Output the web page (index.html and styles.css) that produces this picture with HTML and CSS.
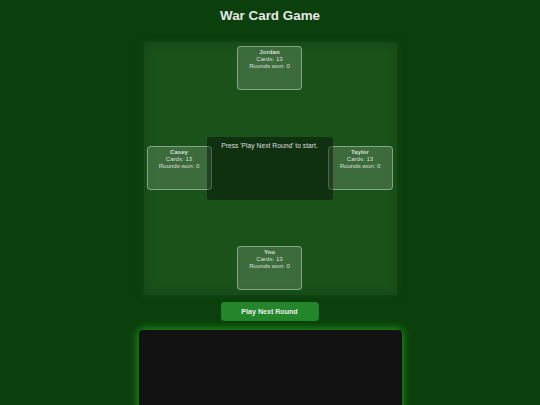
FILE: index.html
```html
<!DOCTYPE html>
<html>
<head>
<meta charset="utf-8">
<title>War Card Game</title>
<link rel="stylesheet" href="styles.css">
</head>
<body>
<h1 class="title">War Card Game</h1>
<div class="table">
  <div class="row">
    <div class="player"><div class="name">Jordan</div><div>Cards: 13</div><div>Rounds won: 0</div></div>
  </div>
  <div class="row middle">
    <div class="player"><div class="name">Casey</div><div>Cards: 13</div><div>Rounds won: 0</div></div>
    <div class="center">Press 'Play Next Round' to start.</div>
    <div class="player"><div class="name">Taylor</div><div>Cards: 13</div><div>Rounds won: 0</div></div>
  </div>
  <div class="row">
    <div class="player"><div class="name">You</div><div>Cards: 13</div><div>Rounds won: 0</div></div>
  </div>
</div>
<div class="controls"><button class="play">Play Next Round</button></div>
<div class="log"></div>
</body>
</html>
```
FILE: styles.css
```css
html, body {
  margin: 0;
  padding: 0;
  background: #0b3f0b;
  font-family: "Liberation Sans", Arial, sans-serif;
  color: #e2e2e2;
  overflow: hidden;
}
.title {
  margin: 8px 0 0;
  font-size: 13.4px;
  line-height: 16px;
  font-weight: bold;
  text-align: center;
  color: #e6e6e6;
}
.table {
  width: 246px;
  height: 244px;
  margin: 18px auto 0;
  padding: 4px 4px 5px 3px;
  background: #1a531a;
  box-shadow: 0 0 6px 1px rgba(22, 74, 22, 0.7), inset 0 0 10px 3px rgba(0, 0, 0, 0.13);
  display: flex;
  flex-direction: column;
  justify-content: space-between;
}
.row {
  display: flex;
  justify-content: center;
}
.middle {
  justify-content: space-between;
  align-items: center;
}
.player {
  width: 63px;
  height: 40px;
  box-sizing: content-box;
  border: 1px solid rgba(255, 255, 255, 0.38);
  border-radius: 4px;
  background: rgba(255, 255, 255, 0.15);
  font-size: 6.1px;
  line-height: 6.9px;
  text-align: center;
  padding-top: 2px;
  color: #dedede;
}
.name {
  font-weight: bold;
}
.center {
  position: relative;
  z-index: 1;
  width: 116px;
  height: 53px;
  margin: 0 -5px;
  padding: 5px;
  box-sizing: content-box;
  background: rgba(0, 0, 0, 0.4);
  border-radius: 3px;
  font-size: 6.75px;
  line-height: 7.5px;
  text-align: center;
  color: #dedede;
}
.controls {
  display: flex;
  justify-content: center;
  margin-top: 7px;
}
.play {
  width: 98px;
  height: 19px;
  border: none;
  border-radius: 4px;
  background: #23862a;
  color: #eeeeee;
  font-family: "Liberation Sans", Arial, sans-serif;
  font-weight: bold;
  font-size: 7.1px;
  padding: 0;
  position: relative;
  left: -0.5px;
}
.log {
  width: 263px;
  height: 160px;
  margin: 9px auto 0;
  background: #121212;
  border-radius: 4px;
  box-shadow: 0 0 8px 1px #1f9a1f;
}
```
